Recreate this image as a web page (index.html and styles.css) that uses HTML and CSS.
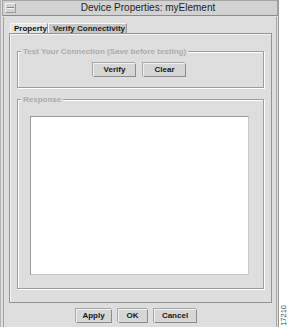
FILE: index.html
```html
<!DOCTYPE HTML>
<html lang="en">

<head>
    <title>Device Properties: myElement</title>
    <meta charset="utf-8">
    <link rel="stylesheet" href="styles.css">
</head>

<body>

    <div id="screen">
        <div id="window">
            <div id="titlebar">
                <span class="menu-btn"><span class="slit"></span></span>
                <span class="title">Device Properties: myElement</span>
            </div>

            <div id="client">
                <div class="tabs">
                    <span class="tab tab-property">Property</span>
                    <span class="tab tab-verify">Verify Connectivity</span>
                </div>

                <div class="panel">
                    <fieldset class="group group-test">
                        <legend>Test Your Connection (Save before testing)</legend>
                        <div class="row">
                            <button class="btn btn-wide">Verify</button>
                            <button class="btn btn-wide">Clear</button>
                        </div>
                    </fieldset>

                    <fieldset class="group group-response">
                        <legend>Response</legend>
                        <div class="response"></div>
                    </fieldset>
                </div>

                <div class="actions">
                    <button class="btn btn-apply">Apply</button>
                    <button class="btn btn-ok">OK</button>
                    <button class="btn btn-cancel">Cancel</button>
                </div>
            </div>
        </div>

        <div id="side">
            <span class="fig-no">17210</span>
        </div>
    </div>

</body>

</html>
```

FILE: styles.css
```css
html {
    height: 100%;
}
body {
    margin: 0;
    padding: 0;
    background: #ffffff;
    color: #1a1a1a;
    font-family: "Liberation Sans", Arial, sans-serif;
    font-size: 8px;
    line-height: 10px;
}
#screen {
    display: flex;
    width: 289px;
    height: 327px;
}
#window {
    width: 279px;
    height: 327px;
    box-sizing: border-box;
    display: flex;
    flex-direction: column;
    background: #dedede;
    border-left: 1px solid #b4b4b4;
    border-right: 1px solid #9a9a9a;
}
#titlebar {
    height: 16px;
    box-sizing: border-box;
    display: flex;
    align-items: center;
    background: #d2d2d2;
    border: 1px solid #a4a4a4;
    border-bottom-color: #8c8c8c;
    margin: 0 0 1px 1px;
    padding-left: 2px;
}
.menu-btn {
    width: 11px;
    height: 10px;
    box-sizing: border-box;
    display: flex;
    align-items: center;
    justify-content: center;
    border: 1px solid #9c9c9c;
    border-top-color: #f2f2f2;
    border-left-color: #f2f2f2;
}
.slit {
    width: 7px;
    height: 2px;
    box-sizing: border-box;
    border-top: 1px solid #8a8a8a;
    border-bottom: 1px solid #f4f4f4;
}
.title {
    flex: 1;
    text-align: center;
    font-size: 10px;
    color: #1e1e1e;
    padding-left: 3px;
}
#client {
    flex: 1;
    margin-left: 2px;
    margin-right: 1px;
    border-left: 1px solid #a2a2a2;
    border-right: 1px solid #a8a8a8;
    padding-top: 6px;
    display: flex;
    flex-direction: column;
}
.tabs {
    display: flex;
    margin-left: 6px;
    height: 10px;
}
.tab {
    box-sizing: border-box;
    height: 10px;
    line-height: 9px;
    font-weight: bold;
    padding: 0 0 0 3px;
    border: 1px solid #9a9a9a;
    border-bottom: none;
    border-top-color: #f6f6f6;
    border-left-color: #f6f6f6;
}
.tab-property {
    width: 38px;
    background: #e4e4e4;
    color: #111;
}
.tab-verify {
    width: 79px;
    background: #c6c6c6;
    color: #222;
    padding-left: 4px;
}
.panel {
    margin: 0 4px 0 5px;
    border: 1px solid #949494;
    box-shadow: inset 1px 1px 0 #f4f4f4;
    padding: 0 7px 13px 7px;
}
.group {
    margin: 13px 0 0;
    padding: 0 3px;
    min-width: 0;
    border: 1px solid #9c9c9c;
    box-shadow: inset 1px 1px 0 #ffffff, 1px 1px 0 #ffffff;
}
.group legend {
    padding: 0 2px;
    margin-left: 0;
    height: 9px;
    line-height: 9px;
    font-weight: bold;
    color: #ababab;
    background: #dedede;
}
.group-test {
    padding-top: 7px;
    padding-bottom: 10px;
}
.group-response {
    margin-top: 7px;
    padding-top: 12px;
    padding-bottom: 13px;
}
.row {
    display: flex;
    justify-content: center;
    gap: 7px;
    padding-right: 2px;
}
.btn {
    height: 14px;
    box-sizing: border-box;
    margin: 0;
    padding: 0;
    font-family: "Liberation Sans", Arial, sans-serif;
    font-size: 8px;
    font-weight: bold;
    line-height: 12px;
    color: #161616;
    background: #d6d6d6;
    border: 1px solid #8c8c8c;
    border-top-color: #f0f0f0;
    border-left-color: #f0f0f0;
    box-shadow: -1px -1px 0 #a8a8a8;
}
.btn-wide {
    width: 43px;
}
.response {
    height: 159px;
    margin: 0 11px 0 9px;
    box-sizing: border-box;
    background: #ffffff;
    border: 1px solid #9a9a9a;
    border-right-color: #c8c8c8;
    border-bottom-color: #c8c8c8;
}
.actions {
    display: flex;
    justify-content: center;
    gap: 6px;
    margin-top: 6px;
    padding-right: 8px;
}
.btn-apply {
    width: 36px;
}
.btn-ok {
    width: 30px;
}
.btn-cancel {
    width: 43px;
}
#side {
    flex: 1;
    display: flex;
    align-items: flex-end;
    justify-content: center;
    padding-bottom: 1px;
}
.fig-no {
    writing-mode: vertical-rl;
    transform: rotate(180deg);
    font-size: 7.5px;
    line-height: 8px;
    color: #3a3a3a;
}
```
